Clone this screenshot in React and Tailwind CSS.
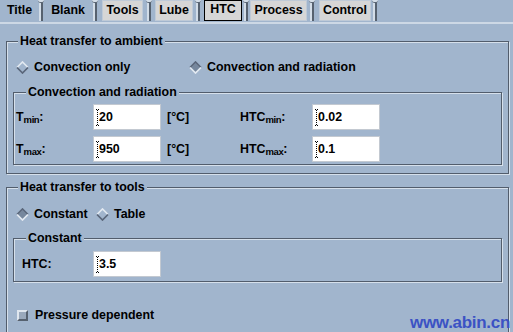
import React from 'react';

function Sep({ className = '' }) {
  return (
    <div className={`relative h-[21px] w-[4px] flex shrink-0 ${className}`}>
      <div className="w-[2px] h-full bg-[#d3dde8]" />
      <div className="w-[2px] h-full bg-[#56616f]" />
      <div className="absolute left-[-1px] top-0 h-[3px] w-[6px] rounded-b-full bg-[#d3dde8] border-b border-[#56616f]" />
    </div>
  );
}

function Tab({ children, className = '' }) {
  return (
    <div className={`h-[21px] flex items-center justify-center shrink-0 ${className}`}>
      {children}
    </div>
  );
}

function Group({ label, left, className = '', children }) {
  return (
    <div
      className={`relative border border-[#525d6c] shadow-[1px_1px_0_#d6e0eb,inset_1px_1px_0_#d6e0eb] ${className}`}
    >
      <span
        className="absolute top-[-8px] bg-[#a1b5cd] px-[2px] leading-[15px] whitespace-nowrap"
        style={{ left }}
      >
        {label}
      </span>
      {children}
    </div>
  );
}

function Diamond({ on }) {
  const top = on ? '#5a667a' : '#e2e9f1';
  const bot = on ? '#e2e9f1' : '#5a667a';
  return (
    <svg width="13" height="13" viewBox="0 0 13 13" className="shrink-0">
      {on && <polygon points="6.5,2 11,6.5 6.5,11 2,6.5" fill="#76879d" />}
      <polyline points="1,6.5 6.5,1 12,6.5" fill="none" stroke={top} strokeWidth="1.7" />
      <polyline points="1,6.5 6.5,12 12,6.5" fill="none" stroke={bot} strokeWidth="1.7" />
    </svg>
  );
}

function Cursor() {
  const dots = [];
  dots.push([0, 0], [2, 0], [1, 1]);
  for (let y = 3; y <= 13; y += 2) dots.push([1, y]);
  dots.push([1, 15], [0, 16], [2, 16]);
  return (
    <svg width="3" height="17" viewBox="0 0 3 17" className="absolute left-[2px] top-[4px]">
      {dots.map(([x, y], i) => (
        <rect key={i} x={x} y={y} width="1" height="1" fill="#000" />
      ))}
    </svg>
  );
}

function Field({ value }) {
  return (
    <div className="relative h-[26px] w-[68px] bg-white border border-[#c3c9d1] flex items-center pl-[5px]">
      <Cursor />
      <span>{value}</span>
    </div>
  );
}

function Sub({ base, sub }) {
  return (
    <span className="whitespace-nowrap">
      {base}
      <span className="text-[9.5px] tracking-[-0.4px] relative top-[2px]">{sub}</span>:
    </span>
  );
}

export default function App() {
  return (
    <div className="relative w-[513px] h-[332px] overflow-hidden bg-[#a1b5cd] font-['Liberation_Sans',Arial,sans-serif] font-bold text-[12.4px] text-black">
      {/* Tab bar */}
      <div className="h-[24px] border-b-2 border-[#cdd8e5] flex items-start">
        <Tab className="w-[39px]">Title</Tab>
        <Sep />
        <Tab className="w-[50px]">Blank</Tab>
        <Sep />
        <Tab className="ml-[5px] w-[41px] bg-[#d6d6d6] border border-[#bfcad7]">Tools</Tab>
        <Sep className="ml-[4px]" />
        <Tab className="ml-[4px] w-[38px] bg-[#d6d6d6] border border-[#bfcad7]">Lube</Tab>
        <Sep className="ml-[3px]" />
        <Tab className="ml-[4px] w-[38px] bg-[#d6d6d6] border border-black pb-[3px]">HTC</Tab>
        <Sep className="ml-[2px]" />
        <Tab className="ml-[2px] w-[57px] bg-[#d6d6d6] border border-[#bfcad7]">Process</Tab>
        <Sep className="ml-[3px]" />
        <Tab className="ml-[5px] w-[52px] bg-[#d6d6d6] border border-[#bfcad7]">Control</Tab>
        <Sep className="ml-[2px]" />
      </div>

      {/* Heat transfer to ambient */}
      <Group label="Heat transfer to ambient" left="11px" className="mt-[17px] ml-[6px] w-[503px] h-[133px]">
        <div className="pt-[17px] pl-[9px] flex items-center h-[33px]">
          <div className="w-[173px] flex items-center gap-[5px]">
            <Diamond on={false} />
            <span>Convection only</span>
          </div>
          <div className="flex items-center gap-[5px]">
            <Diamond on={true} />
            <span>Convection and radiation</span>
          </div>
        </div>
        <Group label="Convection and radiation" left="12px" className="mt-[17px] mx-[6px] h-[73px]">
          <div className="pt-[11px] pl-[2px] grid grid-cols-[77px_68px_79px_72px_68px] auto-rows-[26px] gap-y-[6px] items-center">
            <Sub base="T" sub="min" />
            <Field value="20" />
            <span className="pl-[6px]">[°C]</span>
            <Sub base="HTC" sub="min" />
            <Field value="0.02" />
            <Sub base="T" sub="max" />
            <Field value="950" />
            <span className="pl-[6px]">[°C]</span>
            <Sub base="HTC" sub="max" />
            <Field value="0.1" />
          </div>
        </Group>
      </Group>

      {/* Heat transfer to tools */}
      <Group label="Heat transfer to tools" left="11px" className="mt-[13px] ml-[6px] w-[503px] h-[200px]">
        <div className="pt-[18px] pl-[9px] flex items-center h-[34px]">
          <div className="w-[80px] flex items-center gap-[5px]">
            <Diamond on={true} />
            <span>Constant</span>
          </div>
          <div className="flex items-center gap-[5px]">
            <Diamond on={false} />
            <span>Table</span>
          </div>
        </div>
        <Group label="Constant" left="12px" className="mt-[16px] mx-[6px] h-[44px]">
          <div className="pt-[12px] pl-[8px] flex items-center">
            <span className="w-[71px]">HTC:</span>
            <Field value="3.5" />
          </div>
        </Group>
        <div className="mt-[25px] h-[16px] pl-[10px] flex items-center gap-[7px]">
          <div className="w-[11px] h-[11px] bg-[#9aa9bc] border-t-2 border-l-2 border-[#dfe6ee] border-r-2 border-b-2 border-r-[#56616f] border-b-[#56616f]" />
          <span>Pressure dependent</span>
        </div>
      </Group>

      {/* watermark */}
      <div className="absolute left-[410px] top-[314px] text-[17px] leading-none font-bold text-[#3b52c4] whitespace-nowrap tracking-[-0.3px]">
        www.abin.cn
      </div>
    </div>
  );
}
